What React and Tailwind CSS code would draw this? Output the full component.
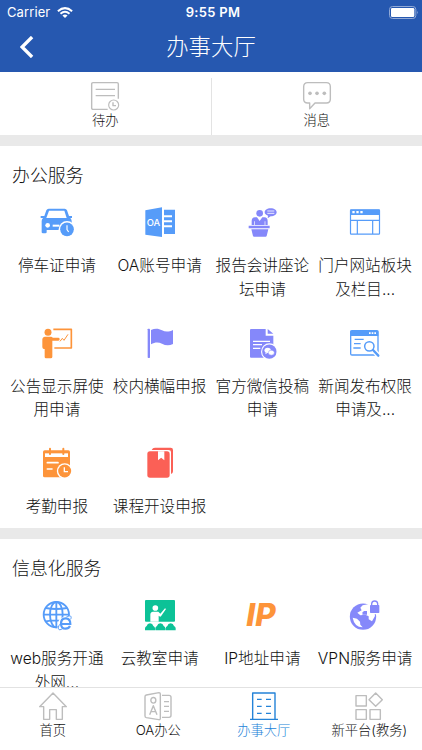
import { useState } from 'react';

// Office services
const officeServices = [
  { icon: CarIcon, lines: ['停车证申请'] },
  { icon: OaIcon, lines: ['OA账号申请'] },
  { icon: LectureIcon, lines: ['报告会讲座论', '坛申请'] },
  { icon: PortalIcon, lines: ['门户网站板块', '及栏目...'] },
  { icon: BoardIcon, lines: ['公告显示屏使', '用申请'] },
  { icon: FlagIcon, lines: ['校内横幅申报'] },
  { icon: WechatDocIcon, lines: ['官方微信投稿', '申请'] },
  { icon: NewsIcon, lines: ['新闻发布权限', '申请及...'] },
  { icon: CalendarIcon, lines: ['考勤申报'] },
  { icon: BookIcon, lines: ['课程开设申报'] },
];

// IT services
const itServices = [
  { icon: WebIcon, lines: ['web服务开通', '外网...'] },
  { icon: ClassroomIcon, lines: ['云教室申请'] },
  { icon: IpIcon, lines: ['IP地址申请'] },
  { icon: VpnIcon, lines: ['VPN服务申请'] },
];

const navItems = [
  { icon: HomeIcon, label: '首页' },
  { icon: OaNavIcon, label: 'OA办公' },
  { icon: HallIcon, label: '办事大厅' },
  { icon: PlatformIcon, label: '新平台(教务)' },
];

function Svg({ children, className }) {
  return (
    <svg viewBox="0 0 96 96" className={`block size-8 overflow-visible ${className}`} fill="currentColor">
      {children}
    </svg>
  );
}

function LineSvg({ children, className = 'text-[#bdbdbd]' }) {
  return (
    <svg
      viewBox="0 0 84 84"
      className={`block size-7 shrink-0 overflow-visible ${className}`}
      fill="none"
      stroke="currentColor"
      strokeWidth="4.2"
      strokeLinejoin="round"
    >
      {children}
    </svg>
  );
}

function CarIcon() {
  return (
    <Svg className="text-[#569cf9]">
      <path d="M-1 30h11l6-17q2-5 7-5h48q5 0 7 5l6 17h9v6h-5q4 4 4 9v27H17v7q0 3-4 3H6q-4 0-4-3V45q0-5 4-9h-7z" />
      <path d="M24 14h46l7 22H16z" fill="#fff" />
      <circle cx="20" cy="58" r="7" fill="#fff" />
      <path d="M35 56h20v6H35z" fill="#fff" />
      <circle cx="78" cy="70" r="25" fill="#fff" />
      <circle cx="78" cy="70" r="20.5" />
      <path d="M78 58v13l5 7" fill="none" stroke="#fff" strokeWidth="3.5" />
    </Svg>
  );
}

function OaIcon() {
  return (
    <Svg className="text-[#569cf9]">
      <path d="M4 13 54 4v89L4 86zM60 11h33v73H60z" />
      <path d="M58 28h26v6H58zM58 43h26v6H58zM58 58h26v6H58z" fill="#fff" />
      <text x="28.5" y="61" fontSize="28" fontWeight="500" textAnchor="middle" fill="#fff">OA</text>
    </Svg>
  );
}

function LectureIcon() {
  return (
    <Svg className="text-[#8588fa]">
      <circle cx="41" cy="22" r="10" />
      <path d="M17 57V45q0-10 10-11h6l8 11 8-11h6q10 1 10 11v12h-7V46h-2v11H27V46h-2v11z" />
      <path d="M8 59h63v8H8zM16 70h51l-5 20q-1 2-3 2H24q-2 0-3-2z" />
      <path d="M74 7c11 0 18 5 18 12s-7 12-18 12l-9 6 1-8c-6-2-10-5-10-10 0-7 7-12 18-12z" />
      <path d="M64 15h21M64 22h21" stroke="#fff" strokeWidth="2.5" />
    </Svg>
  );
}

function PortalIcon() {
  return (
    <Svg className="text-[#569cf9]">
      <rect x="4.5" y="11.5" width="87" height="73" rx="2" fill="none" stroke="currentColor" strokeWidth="3.6" />
      <path d="M4 11h88v16H4z" />
      <path d="M10 15h7v7h-7zM22 15h7v7h-7zM34 15h7v7h-7z" fill="#fff" />
      <path d="M4 43h88M25 43v41M71 43v41" stroke="currentColor" strokeWidth="3.6" />
    </Svg>
  );
}

function BoardIcon() {
  return (
    <Svg className="text-[#fd943a]">
      <circle cx="21" cy="16" r="10.5" />
      <path d="M11 29h20l5 3 16 .5q4 0 4 4t-4 4.500H34v49q0 4-5 4H15q-4 0-4-4V66H8q-4-1-4-6V36q1-6 7-7z" />
      <path d="M37 7h54v56H40" fill="none" stroke="currentColor" strokeWidth="5" strokeLinejoin="round" />
      <path d="m57 43 7-9 5 6 12-18" fill="none" stroke="currentColor" strokeWidth="3" />
    </Svg>
  );
}

function FlagIcon() {
  return (
    <Svg className="text-[#8588fa]">
      <rect x="11" y="5" width="7" height="88" rx="2" />
      <path d="M21 9c12-6 23-5 33 1 11 6 23 4 33-1v42c-11 5-22 5-33-1-11-5-21-5-33 2z" />
    </Svg>
  );
}

function WechatDocIcon() {
  return (
    <Svg className="text-[#8588fa]">
      <path d="M15 6h44v20h23v63q0 3-3 3H15q-3 0-3-3V9q0-3 3-3z" />
      <path d="M65 6v14h17z" />
      <path d="M21 43h51M21 53h27M21 64h22" stroke="#fff" strokeWidth="4" />
      <circle cx="70" cy="74" r="25" fill="#fff" />
      <circle cx="70" cy="74" r="21.5" />
      <ellipse cx="65" cy="70" rx="9.5" ry="8" fill="#fff" />
      <path d="m59 76-1 6 6-4z" fill="#fff" />
      <ellipse cx="76" cy="77" rx="9" ry="7.5" fill="#fff" stroke="currentColor" strokeWidth="1.5" />
    </Svg>
  );
}

function NewsIcon() {
  return (
    <Svg className="text-[#569cf9]">
      <rect x="5" y="11" width="82" height="73" rx="4" fill="none" stroke="currentColor" strokeWidth="4" />
      <path d="M4 11h84v16H4z" />
      <path d="M60 16h5v5h-5zM68 16h5v5h-5zM76 16h5v5h-5z" fill="#fff" />
      <path d="M17 37h27M15 50h20M13 63h22" stroke="currentColor" strokeWidth="4" />
      <path d="m70 66 19 21" stroke="#fff" strokeWidth="15" />
      <circle cx="61" cy="58" r="18" fill="#fff" />
      <circle cx="61" cy="58" r="14" fill="none" stroke="currentColor" strokeWidth="4.5" />
      <path d="m72 69 16 17" stroke="currentColor" strokeWidth="7" strokeLinecap="round" />
    </Svg>
  );
}

function CalendarIcon() {
  return (
    <Svg className="text-[#fd943a]">
      <rect x="6" y="10" width="81" height="81" rx="5" />
      <path d="M12 19h69v11H12z" fill="#fff" />
      <path d="M27 5v16M67 5v16" stroke="currentColor" strokeWidth="6" strokeLinecap="round" />
      <path d="M19 47h32M19 66h14" stroke="#fff" strokeWidth="5" strokeLinecap="round" />
      <circle cx="71" cy="72" r="23.5" fill="#fff" />
      <circle cx="71" cy="72" r="19.5" />
      <path d="M70 61v13h11" fill="none" stroke="#fff" strokeWidth="4" />
    </Svg>
  );
}

function BookIcon() {
  return (
    <Svg className="text-[#fb6056]">
      <path d="M23 9q3-7 10-7h47q7 0 7 7v64q0 6-6 8V15q0-6-7-6z" />
      <rect x="10" y="13" width="67" height="79" rx="8" />
      <path d="M42 13h19v27l-9.500-8-9.500 8z" fill="#fff" />
    </Svg>
  );
}

function WebIcon() {
  return (
    <Svg className="text-[#569cf9]">
      <g fill="none" stroke="currentColor" strokeWidth="5.5">
        <circle cx="46" cy="47" r="38" />
        <ellipse cx="46" cy="47" rx="19" ry="38" />
        <path d="M46 9v76M14 27q32 6 64 0M8 47h76M14 67q32-6 64 0" />
      </g>
      <path d="M51 76q0-22 22-22l18-5q5 2 1 13v18q-8 14-21 14l-20 5q-4-9 0-23z" fill="#fff" />
      <path d="M61 75h27c0-11-5-17-14-17s-14 7-14 16 5 15 14 15c6 0 10-2 13-8" fill="none" stroke="currentColor" strokeWidth="6.5" />
      <path d="M76 54c13-7 17-2 13 7M56 76c-8 13-4 21 9 13" fill="none" stroke="currentColor" strokeWidth="3" />
    </Svg>
  );
}

function ClassroomIcon() {
  return (
    <Svg className="text-[#0cc297]">
      <rect x="3" y="3" width="90" height="65" rx="3" />
      <circle cx="34" cy="27" r="8.5" fill="#fff" />
      <path d="M19 68V47q0-8 8-9h16l6 6 14-16 3 2-15 22q-2 2-5 0l-2-2v18z" fill="#fff" />
      <path d="M3 94v-6q0-5 5-7 2-8 10-8t10 8q5 2 5 7v6zM34 94v-6q0-5 5-7 2-8 10-8t10 8q5 2 5 7v6zM65 94v-6q0-5 5-7 2-8 10-8t10 8q5 2 5 7v6z" />
    </Svg>
  );
}

function IpIcon() {
  return (
    <Svg className="text-[#fd943a]">
      <text x="1" y="82" fontFamily="Inter" fontSize="92" fontWeight="800" fontStyle="italic" textLength="88" lengthAdjust="spacingAndGlyphs">IP</text>
    </Svg>
  );
}

function VpnIcon() {
  return (
    <Svg className="text-[#8588fa]">
      <circle cx="42" cy="53" r="39.5" />
      <path d="M41 19 60 15v22h16l2 14-9 16-10-6v-9l-10-5-15 2-9-8 13-7-4-8zM11 56l13 3 9 9 1 9 7 8q-25-1-30-29z" fill="#fff" />
      <path d="M45 36h9v11H40l1-7z" />
      <rect x="58" y="0" width="38" height="46" rx="5" fill="#fff" />
      <rect x="63" y="18" width="28" height="24" rx="2" />
      <path d="M68 20v-6q1-8 9-8t9 8v6" fill="none" stroke="currentColor" strokeWidth="4" />
    </Svg>
  );
}

function HomeIcon() {
  return (
    <LineSvg>
      <path d="M42 3 2 44h12v38h18V53h20v29h18V44h12z" />
    </LineSvg>
  );
}

function OaNavIcon() {
  return (
    <LineSvg>
      <path d="m7 9 38-7q4 0 4 4v73q0 5-5 4L7 77q-4-1-4-5V14q0-4 4-5zM54 10h21q6 0 6 6v54q0 6-6 6H54M60 29h15M60 43h15M60 58h15" />
      {/* stacked O / A on the door */}
      <ellipse cx="28" cy="25" rx="7.5" ry="8.5" />
      <path d="m17 68 11-27 11 27M21 59h14" />
    </LineSvg>
  );
}

function HallIcon() {
  return (
    <LineSvg className="text-[#2483d8]">
      <path d="M8 82V3h67v79M0 82h84M21 22h14M48 22h15M21 43h14M48 43h15M21 64h14M48 64h15" />
    </LineSvg>
  );
}

function PlatformIcon() {
  return (
    <LineSvg>
      <path d="M3 11h31v31H3zM3 53h31v29H3zM45 53h31v29H45zM62 3l20 20-20 20-20-20z" />
    </LineSvg>
  );
}

function TodoIcon() {
  return (
    <LineSvg>
      <path d="M50 82H6q-4 0-4-4V6q0-4 4-4h72q4 0 4 4v44M14 22h58M14 41h58" />
      <circle cx="68" cy="69" r="15" strokeWidth="3.5" />
      <path d="M66 61v10h9" />
    </LineSvg>
  );
}

function MessageIcon() {
  return (
    <LineSvg>
      <path d="M14 2h56q12 0 12 12v37q0 12-12 12H36L20 80V63h-6Q2 63 2 51V14Q2 2 14 2z" />
      <g fill="currentColor" stroke="none">
        <circle cx="21" cy="34" r="5.5" />
        <circle cx="42" cy="34" r="5.5" />
        <circle cx="64" cy="34" r="5.5" />
      </g>
    </LineSvg>
  );
}

function StatusBar() {
  return (
    <div className="grid h-6 grid-cols-3 items-center px-[7px] text-[13px] leading-6">
      <div className="flex items-center gap-[7px] font-normal">
        <span className="tracking-[0.1px]">Carrier</span>
        <svg viewBox="0 0 48 34" className="h-[11px] w-4" fill="none" stroke="#fff" strokeWidth="6">
          <path d="M2 13q22-19 44 0M10 21q14-12 28 0" />
          <path d="m16 26 8 8 8-8q-8-6-16 0z" fill="#fff" stroke="none" />
        </svg>
      </div>
      <span className="pl-1 text-center font-semibold tracking-[0.3px]">9:55 PM</span>
      <svg viewBox="0 0 90 39" className="-mr-1 h-[13px] w-[30px] justify-self-end">
        <rect x="1.5" y="1.5" width="79" height="36" rx="9" fill="none" stroke="#91a9d6" strokeWidth="3" />
        <rect x="6" y="6" width="70" height="27" rx="4" fill="#fff" />
        <path d="M84 14q5 5 0 11z" fill="#91a9d6" />
      </svg>
    </div>
  );
}

function Section({ title, items }) {
  return (
    <section className="bg-white">
      <h2 className="h-[60px] pt-4 pl-3 text-[17.9px] leading-7">{title}</h2>
      <div className="grid grid-cols-4 px-[5.5px]">
        {items.map(({ icon: Icon, lines }) => (
          <button key={lines[0]} className="flex h-[120.5px] flex-col items-center whitespace-nowrap">
            <Icon />
            <span className="mt-4 text-[15.6px] leading-[23.5px]">
              {lines.map((line) => (
                <span key={line} className="block">{line}</span>
              ))}
            </span>
          </button>
        ))}
      </div>
    </section>
  );
}

export default function App() {
  const [active, setActive] = useState(2);

  return (
    <div className="flex h-[750px] w-[422px] flex-col overflow-hidden bg-white font-['Inter','Noto_Sans_CJK_SC',sans-serif] font-light text-[#111]">
      {/* Header */}
      <header className="h-[72px] shrink-0 bg-[#2658b0] text-white">
        <StatusBar />
        <div className="grid h-[46px] grid-cols-[60px_1fr_60px] items-center">
          <button className="pl-5">
            <svg viewBox="0 0 40 66" className="h-[22px] w-[13.5px]" fill="none" stroke="#fff" strokeWidth="10">
              <path d="M36 3 6 33l30 30" />
            </svg>
          </button>
          <h1 className="text-center text-[22.4px] leading-8">办事大厅</h1>
        </div>
      </header>

      {/* Shortcuts */}
      <div className="flex h-[63px] shrink-0 pt-1.5">
        <button className="flex flex-1 flex-col items-center border-r border-[#e3e3e3] pt-1 text-[13.3px] leading-[21px]">
          <TodoIcon />
          <span>待办</span>
        </button>
        <button className="flex flex-1 flex-col items-center pt-1 text-[13.3px] leading-[21px]">
          <MessageIcon />
          <span>消息</span>
        </button>
      </div>

      {/* Services */}
      <main className="min-h-0 flex-1 overflow-hidden">
        <div className="h-[11px] bg-[#e9e9e9]" />
        <div className="h-[382px] overflow-hidden">
          <Section title="办公服务" items={officeServices} />
        </div>
        <div className="h-[11px] bg-[#e9e9e9]" />
        <Section title="信息化服务" items={itServices} />
      </main>

      {/* Bottom navigation */}
      <nav className="grid h-[63px] shrink-0 grid-cols-4 border-t border-[#e2e2e2] bg-white">
        {navItems.map(({ icon: Icon, label }, i) => (
          <button
            key={label}
            onClick={() => setActive(i)}
            className={`flex flex-col items-center pt-1 text-[13.3px] leading-[21px] whitespace-nowrap ${i === active ? 'text-[#2483d8]' : ''}`}
          >
            <Icon />
            <span>{label}</span>
          </button>
        ))}
      </nav>
    </div>
  );
}
